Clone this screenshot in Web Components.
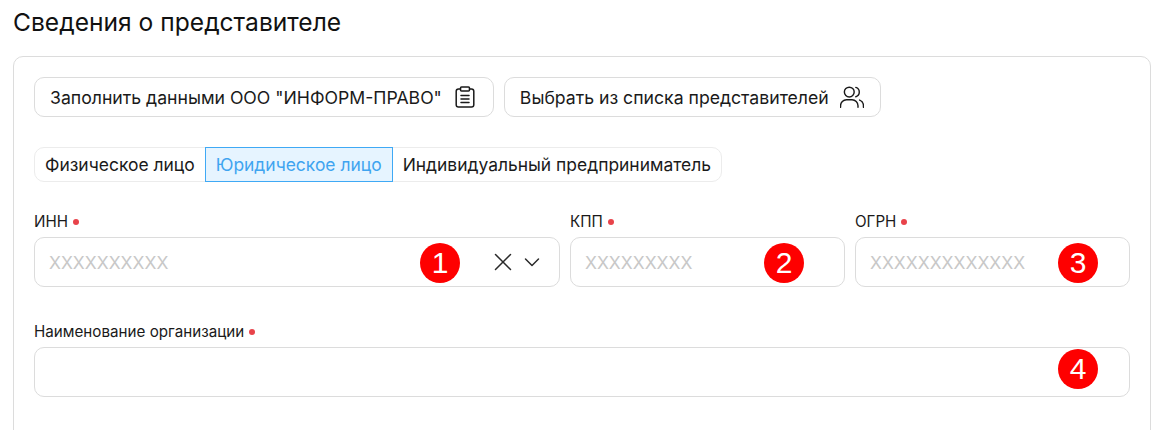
<!DOCTYPE html>
<html lang="ru">
<head>
<meta charset="utf-8">
<title>Сведения о представителе</title>
<style>
  html, body { margin: 0; background: #fff; overflow: hidden; }
  body { height: 430px; font-family: Inter, "Noto Sans", sans-serif; color: #1a1a1a; }
</style>
</head>
<body>
<rep-section heading="Сведения о представителе">
  <action-row>
    <app-button data-label='Заполнить данными ООО "ИНФОРМ-ПРАВО"'>
      <svg slot="icon" width="24" height="24" viewBox="0 0 24 24" fill="none" stroke="#1a1a1a" stroke-width="1.5" stroke-linecap="round" stroke-linejoin="round">
        <rect x="7.500" y="2" width="9" height="4" rx="1"/>
        <path d="M16.500 4h2A2.300 2.300 0 0 1 20.800 6.300V19.700A2.300 2.300 0 0 1 18.500 22H5.500A2.300 2.300 0 0 1 3.200 19.700V6.300A2.300 2.300 0 0 1 5.500 4h2"/>
        <path d="M8 10.500h8M8 14h8M8 17.500h8"/>
      </svg>
    </app-button>
    <app-button data-label="Выбрать из списка представителей">
      <svg slot="icon" width="24" height="24" viewBox="1 1 22 22" fill="none" stroke="#1a1a1a" stroke-width="1.300" stroke-linecap="round" stroke-linejoin="round">
        <circle cx="9.500" cy="7.500" r="4.500"/>
        <path d="M1.500 21.500v-1.500a5.500 5.500 0 0 1 5.500-5.500h5a5.500 5.500 0 0 1 5.500 5.500v1.500"/>
        <path d="M15.500 3.200a4.500 4.500 0 0 1 0 8.600"/>
        <path d="M19 14.800a5.500 5.500 0 0 1 3.500 5.200v1.500"/>
      </svg>
    </app-button>
  </action-row>

  <tab-group>
    <tab-item>Физическое лицо</tab-item>
    <tab-item active>Юридическое лицо</tab-item>
    <tab-item>Индивидуальный предприниматель</tab-item>
  </tab-group>

  <field-grid>
    <text-field data-label="ИНН" data-placeholder="XXXXXXXXXX" data-badge="1" data-badge-right="99" clearable></text-field>
    <text-field data-label="КПП" data-placeholder="XXXXXXXXX" data-badge="2" data-badge-right="40"></text-field>
    <text-field data-label="ОГРН" data-placeholder="XXXXXXXXXXXXX" data-badge="3" data-badge-right="31"></text-field>
    <text-field class="wide" data-label="Наименование организации" data-badge="4" data-badge-right="31" data-badge-shift="-4"></text-field>
  </field-grid>
</rep-section>

<script>
class RepSection extends HTMLElement
{
  constructor()
  {
    super();
    this.attachShadow({mode: "open"});
    this.shadowRoot.innerHTML = `
      <style>
        :host { display: block; padding: 0 15px 0 13px; }
        h2 {
          margin: 0;
          padding-top: 7px;
          height: 56px;
          box-sizing: border-box;
          font-size: 24.600px;
          line-height: 30px;
          font-weight: 430;
          color: #111;
        }
        .card {
          box-sizing: border-box;
          border: 1px solid #dcdcdc;
          border-radius: 10px;
          padding: 20px 20px 60px;
          display: flex;
          flex-direction: column;
        }
      </style>
      <h2>${this.getAttribute("heading") ?? ""}</h2>
      <div class="card"><slot></slot></div>
    `;
  }
}

class ActionRow extends HTMLElement
{
  constructor()
  {
    super();
    this.attachShadow({mode: "open"});
    this.shadowRoot.innerHTML = `
      <style>
        :host { display: flex; gap: 10px; margin-bottom: 30px; }
      </style>
      <slot></slot>
    `;
  }
}

class AppButton extends HTMLElement
{
  constructor()
  {
    super();
    this.attachShadow({mode: "open"});
    this.shadowRoot.innerHTML = `
      <style>
        :host {
          display: inline-flex;
          align-items: center;
          gap: 11px;
          box-sizing: border-box;
          height: 40px;
          padding: 0 16px 0 15px;
          border: 1px solid #dcdcdc;
          border-radius: 10px;
          font-size: 17.650px;
          white-space: nowrap;
        }
        ::slotted(svg) { display: block; flex: none; }
      </style>
      <span>${(this.getAttribute("data-label") ?? "").replace(/"/g, "&quot;")}</span>
      <slot name="icon"></slot>
    `;
  }
}

class TabGroup extends HTMLElement
{
  constructor()
  {
    super();
    this.attachShadow({mode: "open"});
    this.shadowRoot.innerHTML = `
      <style>
        :host {
          display: inline-flex;
          align-self: flex-start;
          box-sizing: border-box;
          height: 35px;
          border: 1px solid #ececec;
          border-radius: 10px;
          margin-bottom: 32px;
        }
      </style>
      <slot></slot>
    `;
  }
}

class TabItem extends HTMLElement
{
  constructor()
  {
    super();
    this.attachShadow({mode: "open"});
    this.shadowRoot.innerHTML = `
      <style>
        :host {
          display: flex;
          align-items: center;
          box-sizing: border-box;
          padding: 0 10px;
          font-size: 17.450px;
          white-space: nowrap;
        }
        :host([active]) {
          margin: -1px 0;
          background: #e6f4ff;
          border: 1px solid #3fa9f5;
          color: #3fa4f0;
        }
      </style>
      <slot></slot>
    `;
  }
}

class FieldGrid extends HTMLElement
{
  constructor()
  {
    super();
    this.attachShadow({mode: "open"});
    this.shadowRoot.innerHTML = `
      <style>
        :host {
          display: grid;
          grid-template-columns: 526px 275px 275px;
          column-gap: 10px;
          row-gap: 37px;
        }
        ::slotted(.wide) { grid-column: 1 / -1; }
      </style>
      <slot></slot>
    `;
  }
}

class TextField extends HTMLElement
{
  constructor()
  {
    super();
    this.attachShadow({mode: "open"});

    const placeholder = this.getAttribute("data-placeholder") ?? "";
    const clear = this.hasAttribute("clearable") ? `
      <div class="tools">
        <svg width="20" height="20" viewBox="0 0 20 20" fill="none" stroke="#2a2a2a" stroke-width="1.500" stroke-linecap="round"><path d="M2.500 2.500l15 15M17.500 2.500l-15 15"/></svg>
        <svg width="16" height="16" viewBox="0 0 16 16" fill="none" stroke="#2a2a2a" stroke-width="1.500" stroke-linecap="round" stroke-linejoin="round"><path d="M1.500 5l6.500 6.500L14.500 5"/></svg>
      </div>` : "";

    this.shadowRoot.innerHTML = `
      <style>
        :host { display: block; min-width: 0; }
        label {
          display: flex;
          align-items: center;
          gap: 5px;
          height: 15px;
          margin-bottom: 8px;
          font-size: 15.200px;
          line-height: 15px;
        }
        label i {
          width: 6px;
          height: 6px;
          border-radius: 50%;
          background: #e8434a;
        }
        .box {
          position: relative;
          display: flex;
          align-items: center;
          justify-content: space-between;
          box-sizing: border-box;
          height: 50px;
          padding: 0 19px 0 14px;
          border: 1px solid #dcdcdc;
          border-radius: 10px;
        }
        .placeholder { font-size: 17.500px; color: #c8c8c8; }
        .tools { display: flex; align-items: center; gap: 11px; }
        .tools svg { display: block; }
        .badge {
          position: absolute;
          top: 5px;
          width: 40px;
          height: 40px;
          border-radius: 50%;
          background: #fe0000;
          color: #fff;
          font: 30px/40px "Liberation Sans", Arial, sans-serif;
          text-align: center;
        }
      </style>
      <label>${this.getAttribute("data-label") ?? ""}<i></i></label>
      <div class="box">
        <span class="placeholder">${placeholder}</span>
        ${clear}
        <span class="badge" style="right:${this.getAttribute("data-badge-right")}px;margin-top:${this.getAttribute("data-badge-shift") ?? 0}px">${this.getAttribute("data-badge")}</span>
      </div>
    `;
  }
}

customElements.define("rep-section", RepSection);
customElements.define("action-row", ActionRow);
customElements.define("app-button", AppButton);
customElements.define("tab-group", TabGroup);
customElements.define("tab-item", TabItem);
customElements.define("field-grid", FieldGrid);
customElements.define("text-field", TextField);
</script>
</body>
</html>
